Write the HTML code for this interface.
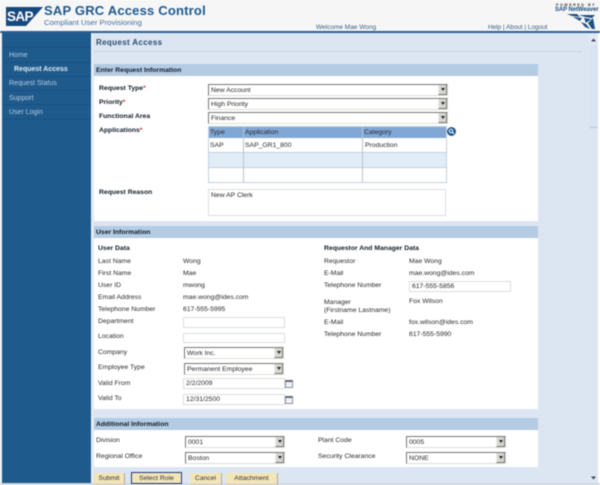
<!DOCTYPE html>
<html><head><meta charset="utf-8"><style>
html,body{margin:0;padding:0;background:#fff}
#r{position:relative;width:600px;height:485px;overflow:hidden;background:#f6f6f6;font-family:"Liberation Sans",sans-serif;font-size:6.8px;color:#2b2b2b;filter:blur(.4px)}
#r div,#r span.a,#r svg{position:absolute}
.t{white-space:nowrap;line-height:9px;height:9px}
.b{font-weight:bold;color:#111c2a}
.h{left:94px;width:444px;height:12px;background:#b3cbe3;font-weight:bold;font-size:6.8px;line-height:13px;color:#111c2a;text-indent:2px}
.w{left:94px;width:444px;background:#fff}
.s{height:10px;background:#fff;border:1px solid #777;border-bottom-color:#dcdcd8;border-right-color:#dcdcd8;box-sizing:content-box;line-height:11px;text-indent:2px;color:#2b2b2b;white-space:nowrap}
.s i{position:absolute;right:0;top:0;width:9px;height:10px;background:#d8d8d2;border-left:1px solid #eee;border-right:1px solid #777;border-bottom:1px solid #777;box-sizing:border-box}
.s i:after{content:"";position:absolute;left:1.5px;top:3px;border:2px solid transparent;border-top:3px solid #222;border-bottom:0}
.i{background:#fff;border:1px solid #d9dcdf;box-sizing:border-box;line-height:9px;text-indent:2px;color:#2b2b2b;white-space:nowrap}
.n{left:9px;color:#b3cade;line-height:9px;font-size:7px;white-space:nowrap}
.l{left:2px;width:89px;height:1px;background:#1a5080}
.btn{top:473px;height:11px;background:#f4e6b4;border-right:1px solid #aaa;border-bottom:1px solid #bbb;text-align:center;line-height:11px;color:#334;box-sizing:content-box}
.c{background:#eef1f5;border:1px solid #8a939e;border-top:2px solid #667;box-sizing:border-box;width:8px;height:8px}
</style></head><body><div id="r">
<div style="left:0;top:31px;width:600px;height:2px;background:#2a5f94"></div>
<div style="left:0;top:33px;width:600px;height:452px;background:#dce6f3"></div>
<div style="left:0;top:33px;width:2px;height:450px;background:#f0f3f7"></div>
<div style="left:2px;top:33px;width:89px;height:450px;background:#1f5a8c"></div>
<div style="left:91px;top:33px;width:2px;height:450px;background:#e8eef6"></div>
<div style="left:0;top:483px;width:600px;height:2px;background:#cfd6df"></div>
<div style="left:598px;top:33px;width:2px;height:450px;background:#fff"></div>

<svg style="left:6px;top:7px" width="37" height="19" viewBox="0 0 37 19"><polygon points="0,0 37,0 20,19 0,19" fill="#17497f"/></svg>
<div class="t" style="left:7px;top:9px;height:15px;line-height:15px;font-size:13.5px;font-weight:bold;color:#fff;letter-spacing:-.6px">SAP</div>
<div class="t" style="left:44px;top:4px;height:14px;line-height:14px;font-size:13px;font-weight:bold;color:#1d5990;letter-spacing:.2px">SAP GRC Access Control</div>
<div class="t" style="left:44px;top:17px;height:11px;line-height:11px;font-size:7.75px;color:#44709c">Compliant User Provisioning</div>
<div class="t" style="left:316px;top:23px;font-size:6.5px;color:#3d5f85">Welcome Mae Wong</div>
<div class="t" style="left:488px;top:23px;font-size:6.4px;color:#3d5f85">Help | About | Logout</div>
<div class="t" style="left:556px;top:3px;height:5px;line-height:5px;font-size:3.6px;font-weight:bold;color:#333;letter-spacing:1.55px">POWERED BY</div>
<div class="t" style="left:555px;top:7px;height:7px;line-height:7px;font-size:6px;font-weight:bold;color:#1d4f82;letter-spacing:-.1px">SAP NetWeaver</div>
<svg style="left:555px;top:12px" width="42" height="18" viewBox="0 0 42 18"><path d="M12 2H22L25 5L17 4ZM24 3H40L37 6L30 5ZM18 5L27 6L25 9ZM29 6L36 7L31 11ZM26 10L31 12L35 17L30 15ZM33 11L38 6L40 17L37 17Z" fill="#1d4f82"/></svg>

<div class="n" style="top:51px">Home</div>
<div class="n" style="top:65px;left:14px;font-weight:bold;color:#dfeaf4">Request Access</div>
<div class="n" style="top:79px">Request Status</div>
<div class="n" style="top:94px">Support</div>
<div class="n" style="top:108px">User Login</div>
<div class="l" style="top:47px"></div><div class="l" style="top:62px"></div><div class="l" style="top:76px"></div><div class="l" style="top:90px"></div><div class="l" style="top:104px"></div><div class="l" style="top:119px"></div>

<div class="t" style="left:96px;top:37px;height:11px;line-height:11px;font-size:8px;font-weight:bold;color:#2c4a6c;letter-spacing:.35px">Request Access</div>
<div style="left:94px;top:51px;width:488px;height:1px;background:#c6d1df"></div>
<div style="left:589px;top:35px;width:9px;height:10px;background:#e2eaf5"></div>
<svg style="left:590px;top:38px" width="7" height="4"><path d="M1 3.5L3.5 .5L6 3.5Z" fill="#445"/></svg>
<svg style="left:590px;top:476px" width="7" height="4"><path d="M1 .5L3.5 3.5L6 .5Z" fill="#445"/></svg>
<div style="left:589px;top:45px;width:9px;height:82px;background:#d9e3f1;border-bottom:1px solid #b7c6da"></div>

<div class="h" style="top:64px">Enter Request Information</div>
<div class="w" style="top:76px;height:145px"></div>
<div class="t b" style="left:99px;top:84px">Request Type<span style="color:#c33">*</span></div>
<div class="t b" style="left:99px;top:98px">Priority<span style="color:#c33">*</span></div>
<div class="t b" style="left:99px;top:112px">Functional Area</div>
<div class="t b" style="left:99px;top:126px">Applications<span style="color:#c33">*</span></div>
<div class="t b" style="left:99px;top:188px">Request Reason</div>
<div class="s" style="left:208px;top:84px;width:238px">New Account<i></i></div>
<div class="s" style="left:208px;top:98px;width:238px">High Priority<i></i></div>
<div class="s" style="left:208px;top:112px;width:238px">Finance<i></i></div>

<div style="left:208px;top:126px;width:239px;height:57px;background:#fff;border:1px solid #c3d0dd;box-sizing:border-box"></div>
<div style="left:209px;top:127px;width:237px;height:11px;background:#80a7d5"></div>
<div style="left:209px;top:152px;width:237px;height:15px;background:#e0edf6"></div>
<div style="left:209px;top:152px;width:237px;height:1px;background:#c3d0dd"></div>
<div style="left:209px;top:167px;width:237px;height:1px;background:#c3d0dd"></div>
<div style="left:243px;top:127px;width:1px;height:55px;background:#b5c3d2"></div>
<div style="left:362px;top:127px;width:1px;height:55px;background:#b5c3d2"></div>
<div class="t" style="left:210px;top:128px">Type</div><div class="t" style="left:245px;top:128px">Application</div><div class="t" style="left:364px;top:128px">Category</div>
<div class="t" style="left:210px;top:141px">SAP</div><div class="t" style="left:245px;top:141px">SAP_GR1_800</div><div class="t" style="left:365px;top:141px">Production</div>
<svg style="left:447px;top:127px" width="9" height="9" viewBox="0 0 9 9"><circle cx="4.5" cy="4.5" r="4.5" fill="#1f5a8c"/><circle cx="4" cy="4" r="1.7" fill="none" stroke="#fff"/><path d="M5 5L7 7" stroke="#fff"/></svg>
<div class="i" style="left:208px;top:189px;width:238px;height:27px;border-color:#ddd;padding-top:1px">New AP Clerk</div>

<div class="h" style="top:226px">User Information</div>
<div class="w" style="top:238px;height:171px"></div>
<div class="t b" style="left:98px;top:244px">User Data</div>
<div class="t b" style="left:324px;top:244px">Requestor And Manager Data</div>
<div class="t" style="left:98px;top:257px">Last Name</div><div class="t" style="left:183px;top:257px">Wong</div>
<div class="t" style="left:98px;top:269px">First Name</div><div class="t" style="left:183px;top:269px">Mae</div>
<div class="t" style="left:98px;top:281px">User ID</div><div class="t" style="left:183px;top:281px">mwong</div>
<div class="t" style="left:98px;top:293px">Email Address</div><div class="t" style="left:183px;top:293px">mae.wong@ides.com</div>
<div class="t" style="left:98px;top:305px">Telephone Number</div><div class="t" style="left:183px;top:305px">617-555-5995</div>
<div class="t" style="left:98px;top:317px">Department</div><div class="i" style="left:183px;top:317px;width:102px;height:11px"></div>
<div class="t" style="left:98px;top:332px">Location</div><div class="i" style="left:183px;top:333px;width:102px;height:10px"></div>
<div class="t" style="left:98px;top:348px">Company</div><div class="s" style="left:184px;top:347px;width:98px;">Work Inc.<i></i></div>
<div class="t" style="left:98px;top:363px">Employee Type</div><div class="s" style="left:184px;top:363px;width:98px">Permanent Employee<i></i></div>
<div class="t" style="left:98px;top:379px">Valid From</div><div class="i" style="left:183px;top:378px;width:102px;height:11px">2/2/2009</div><div class="c" style="left:285px;top:380px"></div>
<div class="t" style="left:98px;top:394px">Valid To</div><div class="i" style="left:183px;top:394px;width:102px;height:11px">12/31/2500</div><div class="c" style="left:285px;top:396px"></div>
<div class="t" style="left:324px;top:257px">Requestor</div><div class="t" style="left:409px;top:257px">Mae Wong</div>
<div class="t" style="left:324px;top:269px">E-Mail</div><div class="t" style="left:409px;top:269px">mae.wong@ides.com</div>
<div class="t" style="left:324px;top:281px">Telephone Number</div><div class="i" style="left:409px;top:281px;width:102px;height:11px">617-555-5856</div>
<div class="t" style="left:324px;top:298px">Manager</div><div class="t" style="left:409px;top:297px">Fox Wilson</div>
<div class="t" style="left:324px;top:306px">(Firstname Lastname)</div>
<div class="t" style="left:324px;top:318px">E-Mail</div><div class="t" style="left:409px;top:318px">fox.wilson@ides.com</div>
<div class="t" style="left:324px;top:330px">Telephone Number</div><div class="t" style="left:409px;top:330px">617-555-5990</div>

<div class="h" style="top:418px">Additional Information</div>
<div class="w" style="top:430px;height:37px"></div>
<div class="t" style="left:96px;top:436px">Division</div><div class="s" style="left:185px;top:436px;width:98px">0001<i></i></div>
<div class="t" style="left:96px;top:452px">Regional Office</div><div class="s" style="left:185px;top:452px;width:98px">Boston<i></i></div>
<div class="t" style="left:318px;top:436px">Plant Code</div><div class="s" style="left:406px;top:436px;width:98px">0005<i></i></div>
<div class="t" style="left:318px;top:452px">Security Clearance</div><div class="s" style="left:406px;top:452px;width:98px">NONE<i></i></div>

<div class="btn" style="left:94px;width:30px">Submit</div>
<div class="btn" style="left:131px;top:472px;width:51px;height:12px;border:1px solid #1f3a80;box-sizing:border-box">Select Role</div>
<div class="btn" style="left:190px;width:31px">Cancel</div>
<div class="btn" style="left:226px;width:51px">Attachment</div>
</div></body></html>
